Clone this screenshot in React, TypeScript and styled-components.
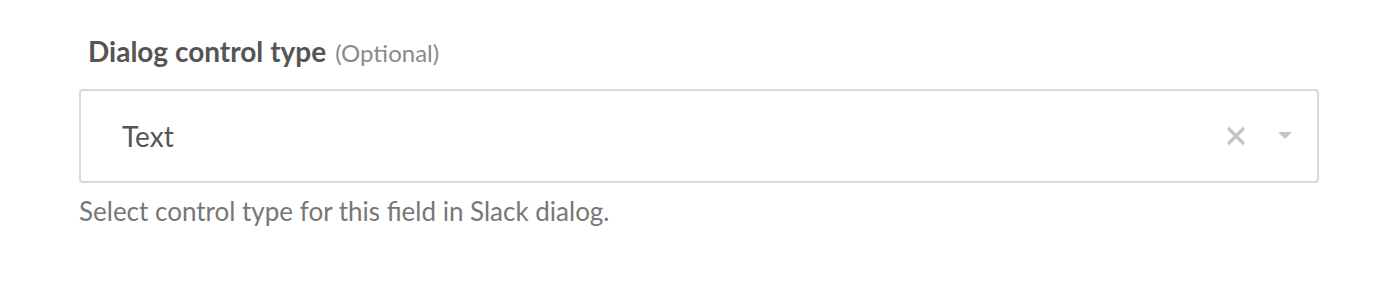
import { FC } from 'react';
import styled, { createGlobalStyle } from 'styled-components';

const GlobalStyle = createGlobalStyle`
  body {
    margin: 0;
    background: #ffffff;
    font-family: Lato, "Open Sans", sans-serif;
  }
`

const Field = styled.div`
  padding: 31px 0 0 79px;
  width: 1240px;
`

const Label = styled.div`
  margin: 0 0 16px 9px;
  font-size: 28px;
  line-height: 40px;
  font-weight: 700;
  color: #555555;
`

const Optional = styled.span`
  margin-left: 9px;
  font-size: 24px;
  font-weight: 400;
  color: #8a8a8a;
`

const SelectBox = styled.div`
  box-sizing: border-box;
  height: 94px;
  border: 2px solid #d9d9d9;
  border-radius: 4px;
  display: flex;
  align-items: center;
  padding: 0 25px 0 41px;
`

const Value = styled.div`
  flex: 1;
  font-size: 28px;
  color: #555555;
`

const Controls = styled.div`
  display: flex;
  align-items: center;
  gap: 31px;
`

const Help = styled.div`
  margin-top: 10px;
  font-size: 26px;
  line-height: 36px;
  color: #777777;
`

export const App: FC = () => {
  return (
    <>
      <GlobalStyle />
      <Field>
        <Label>
          Dialog control type<Optional>(Optional)</Optional>
        </Label>
        <SelectBox>
          <Value>Text</Value>
          <Controls>
            <svg width="22" height="22" viewBox="0 0 22 22">
              <path d="M3 3 L19 19 M19 3 L3 19" stroke="#c6c6c6" strokeWidth="3.6" />
            </svg>
            <svg width="14" height="8" viewBox="0 0 14 8">
              <path d="M0 0 L14 0 L7 7 Z" fill="#c6c6c6" />
            </svg>
          </Controls>
        </SelectBox>
        <Help>Select control type for this field in Slack dialog.</Help>
      </Field>
    </>
  )
}

export default App;
